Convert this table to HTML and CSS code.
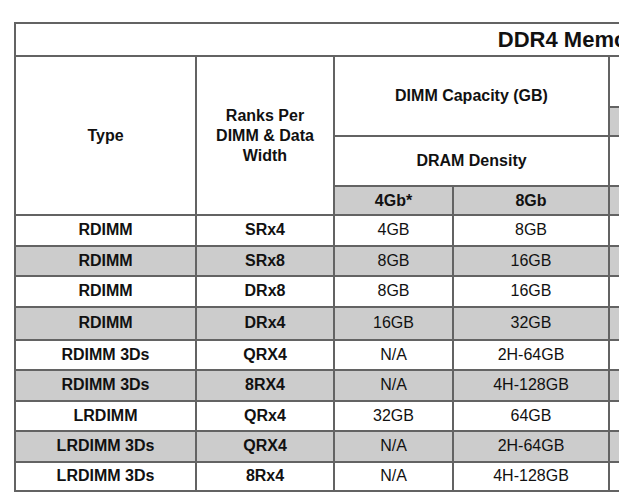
FILE: index.html
```html
<!DOCTYPE html>
<html>
<head>
<meta charset="utf-8">
<link rel="stylesheet" href="styles.css">
</head>
<body>
<div class="frame">
<table class="mem">
  <colgroup>
    <col class="c-type"><col class="c-rank"><col class="c-4"><col class="c-8"><col class="c-x"><col class="c-x"><col class="c-x">
  </colgroup>
  <tr class="r-title"><th colspan="7" class="title">DDR4 Memory</th></tr>
  <tr class="r-h1">
    <th rowspan="4">Type</th>
    <th rowspan="4">Ranks Per<br>DIMM &amp; Data<br>Width</th>
    <th colspan="2" rowspan="2">DIMM Capacity (GB)</th>
    <th colspan="3"></th>
  </tr>
  <tr class="r-h2"><th class="g"></th><th class="g"></th><th class="g"></th></tr>
  <tr class="r-h3"><th colspan="2">DRAM Density</th><th colspan="3"></th></tr>
  <tr class="r-h4"><th class="g">4Gb*</th><th class="g">8Gb</th><th class="g"></th><th class="g"></th><th class="g"></th></tr>
  <tr><th>RDIMM</th><th>SRx4</th><td>4GB</td><td>8GB</td><td></td><td></td><td></td></tr>
  <tr class="g"><th>RDIMM</th><th>SRx8</th><td>8GB</td><td>16GB</td><td></td><td></td><td></td></tr>
  <tr><th>RDIMM</th><th>DRx8</th><td>8GB</td><td>16GB</td><td></td><td></td><td></td></tr>
  <tr class="g tall"><th>RDIMM</th><th>DRx4</th><td>16GB</td><td>32GB</td><td></td><td></td><td></td></tr>
  <tr><th>RDIMM 3Ds</th><th>QRX4</th><td>N/A</td><td>2H-64GB</td><td></td><td></td><td></td></tr>
  <tr class="g"><th>RDIMM 3Ds</th><th>8RX4</th><td>N/A</td><td>4H-128GB</td><td></td><td></td><td></td></tr>
  <tr><th>LRDIMM</th><th>QRx4</th><td>32GB</td><td>64GB</td><td></td><td></td><td></td></tr>
  <tr class="g"><th>LRDIMM 3Ds</th><th>QRX4</th><td>N/A</td><td>2H-64GB</td><td></td><td></td><td></td></tr>
  <tr class="short"><th>LRDIMM 3Ds</th><th>8Rx4</th><td>N/A</td><td>4H-128GB</td><td></td><td></td><td></td></tr>
</table>
</div>
</body>
</html>
```

FILE: styles.css
```css
html, body {
  margin: 0;
  padding: 0;
  background: #ffffff;
  overflow: hidden;
}

.frame {
  width: 619px;
  height: 500px;
  overflow: hidden;
  padding: 22px 0 0 14px;
  box-sizing: border-box;
}

.mem {
  border-collapse: collapse;
  table-layout: fixed;
  width: 1116px;
  font-family: "Liberation Sans", Arial, sans-serif;
  font-size: 16px;
  line-height: 20px;
  color: #111111;
}

.c-type { width: 181px; }
.c-rank { width: 138px; }
.c-4 { width: 119px; }
.c-8 { width: 156px; }
.c-x { width: 174px; }

.mem th,
.mem td {
  border: 2px solid #636363;
  padding: 0;
  text-align: center;
  vertical-align: middle;
}

.mem th { font-weight: bold; }
.mem td { font-weight: normal; }

.mem .title { font-size: 22px; }

/* row pitch = height + 2px collapsed border */
.mem tr > * { height: 28.5px; }
.mem tr.r-title > * { height: 31px; }
.mem tr.r-h1 > * { height: 49px; }
.mem tr.r-h2 > * { height: 27px; }
.mem tr.r-h3 > * { height: 48px; }
.mem tr.r-h4 > * { height: 27px; }
.mem tr.tall > * { height: 31px; }
.mem tr.short > * { height: 27px; }

.mem .g,
.mem tr.g > * {
  background: #cccccc;
}
```
